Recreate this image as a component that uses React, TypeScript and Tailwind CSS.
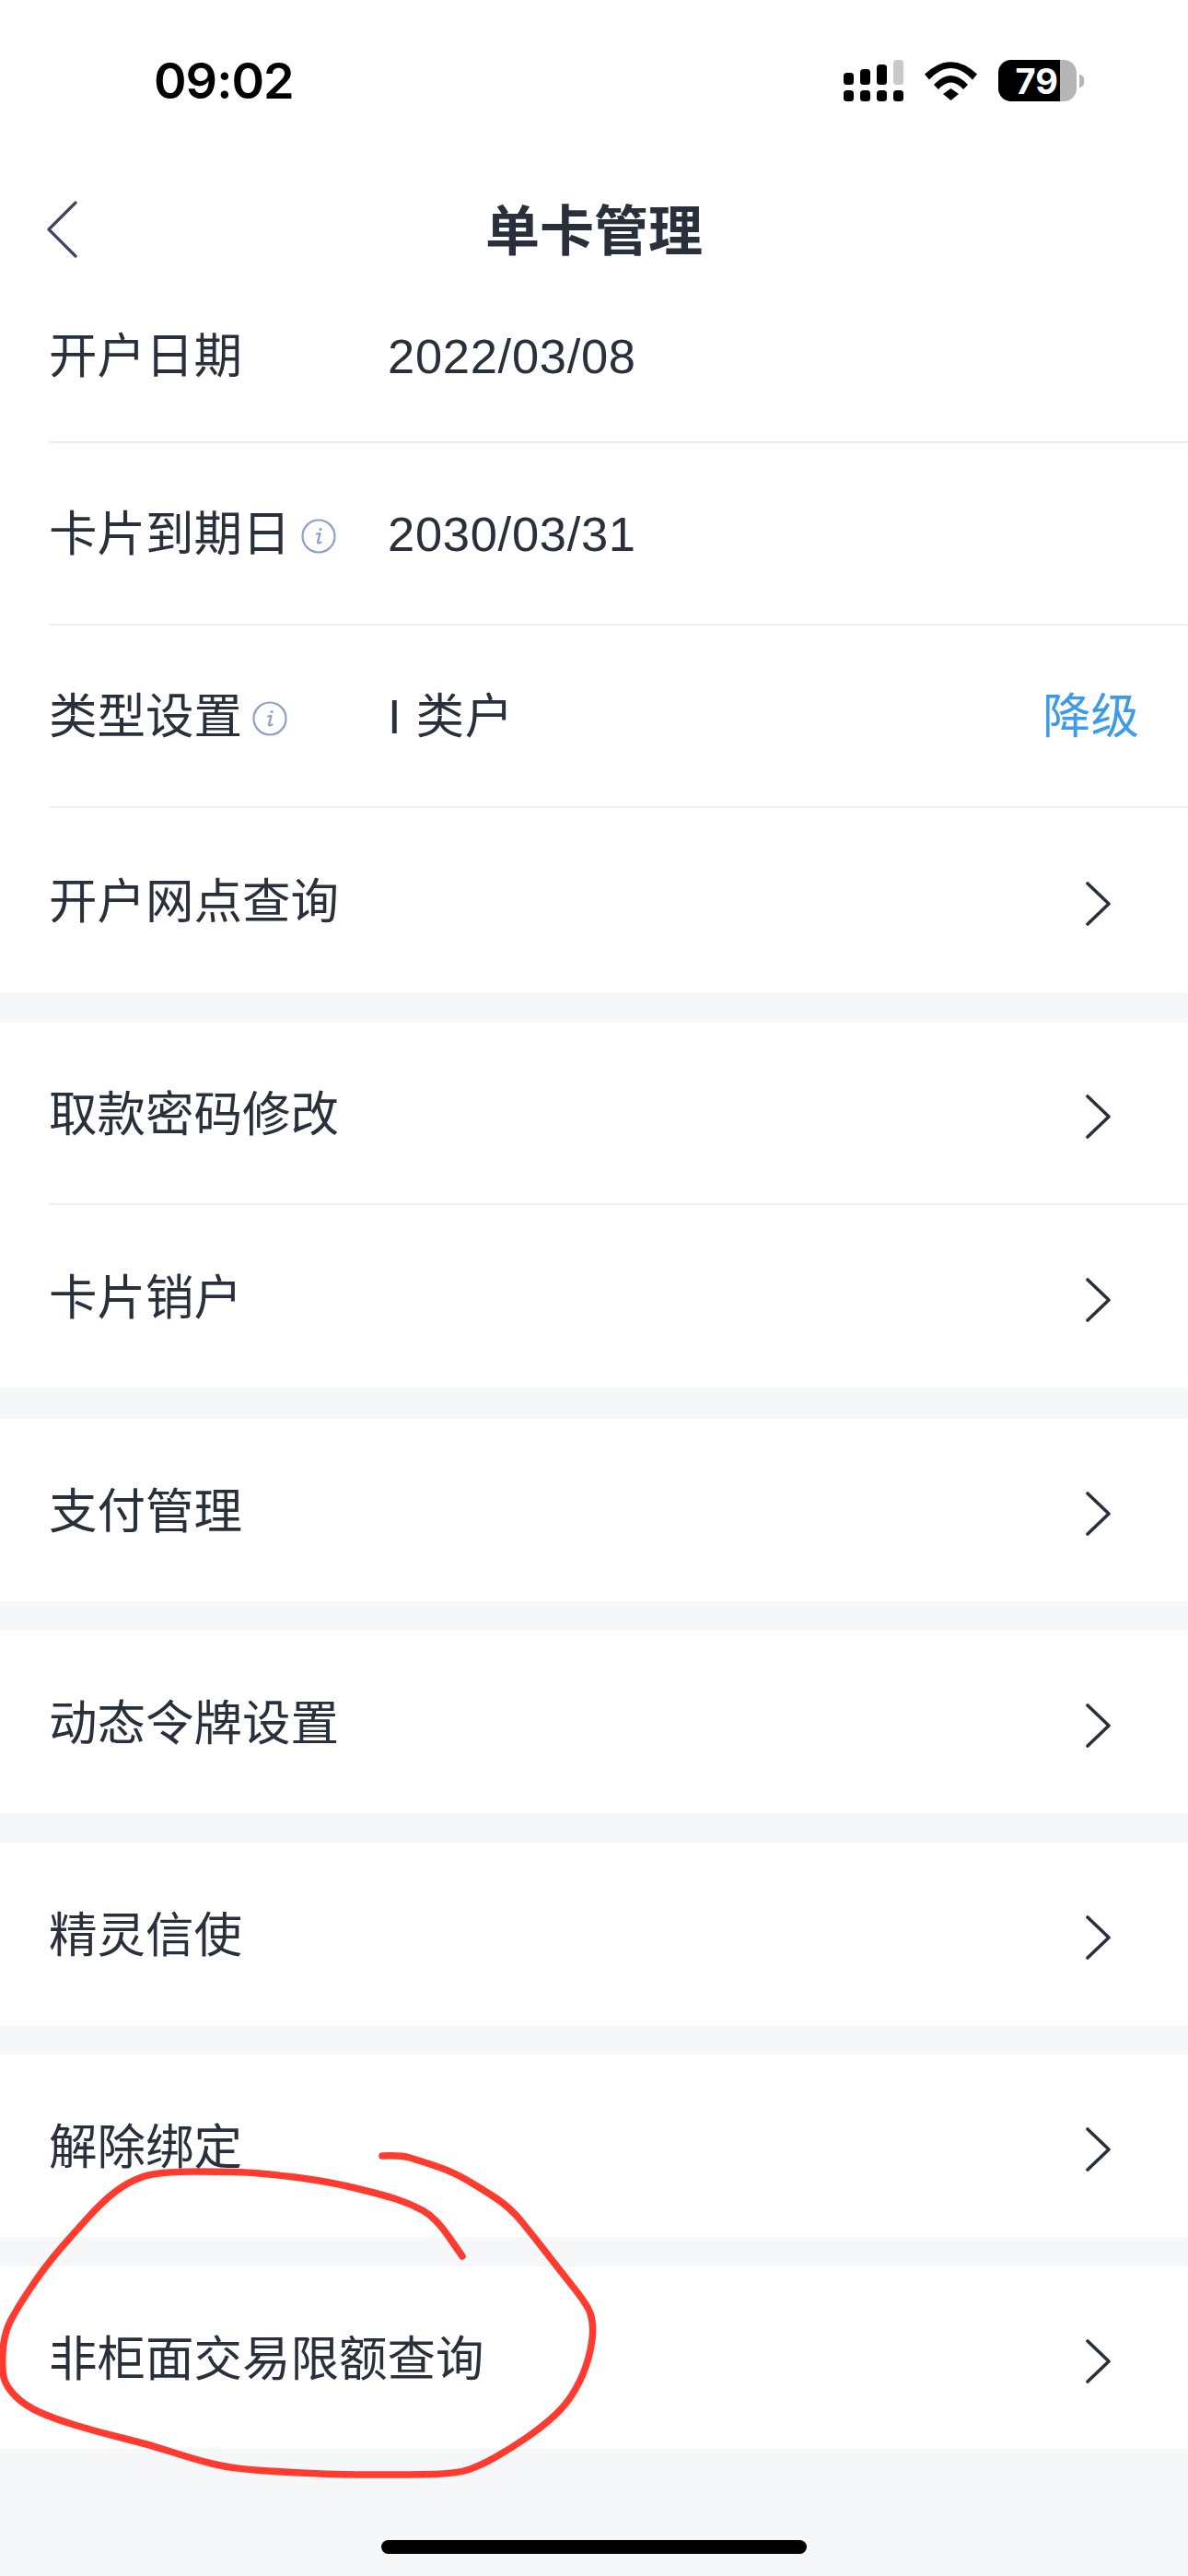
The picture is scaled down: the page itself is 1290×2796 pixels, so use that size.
const textFont = "font-['Liberation_Sans','Noto_Sans_CJK_SC',sans-serif]";

const scribble: [number, number][] = [
  [415, 2340], [435, 2339], [455, 2345], [491, 2357], [522, 2375], [554, 2396], [580, 2428], [607, 2463],
  [638, 2502], [644, 2520], [643, 2545], [634, 2577], [616, 2609], [589, 2634], [554, 2658], [522, 2676],
  [496, 2685], [446, 2686], [371, 2686], [304, 2683], [250, 2679], [210, 2669], [161, 2653], [107, 2640],
  [58, 2625], [27, 2611], [7, 2591], [2, 2573], [4, 2534], [18, 2506], [49, 2460], [80, 2424], [112, 2389],
  [138, 2369], [170, 2357], [259, 2357], [304, 2361], [357, 2368], [415, 2382], [446, 2392], [473, 2407], [502, 2449],
];

// round the hand-drawn stroke off through the midpoints
const scribblePath = () => {
  let d = `M${scribble[0][0]} ${scribble[0][1]}`;
  for (let i = 1; i < scribble.length - 1; i++) {
    const [x, y] = scribble[i];
    const [nx, ny] = scribble[i + 1];
    d += ` Q${x} ${y} ${(x + nx) / 2} ${(y + ny) / 2}`;
  }
  const last = scribble[scribble.length - 1];
  return `${d} L${last[0]} ${last[1]}`;
};

const InfoIcon = () => (
  <svg width="38" height="38" viewBox="0 0 38 38" fill="none" className="ml-[11px] mt-[3px] shrink-0">
    <circle cx="19" cy="19" r="17.5" stroke="#8f9fc9" strokeWidth="2.2" />
    <path d="M17 16.5 L20.5 16 L18 25.5 Q18 27.5 21.5 25.5" stroke="#8f9fc9" strokeWidth="2.2" strokeLinecap="round" strokeLinejoin="round" />
    <circle cx="21" cy="11.5" r="1.6" fill="#8f9fc9" />
  </svg>
);

const RowChevron = () => (
  <svg width="27" height="48" viewBox="0 0 27 48" fill="none" className="mt-[7px] shrink-0">
    <path d="M2 2 L25 24 L2 46" stroke="#2a2f3c" strokeWidth="3.6" strokeLinecap="round" strokeLinejoin="round" />
  </svg>
);

const InfoRow = ({ label, value, info, action }: { label: string; value: string; info?: boolean; action?: string }) => (
  <div className="ml-[53px] flex h-[198px] items-center border-b-2 border-[#eeeff2] pr-[53px] pt-[3px]">
    <div className="flex w-[368px] items-center">
      <span>{label}</span>
      {info ? <InfoIcon /> : null}
    </div>
    <span className="flex-1 tracking-[0.7px]">{value}</span>
    {action ? <span className="text-[#3d9be9]">{action}</span> : null}
  </div>
);

const LinkRow = ({ label, line, tall }: { label: string; line?: boolean; tall?: boolean }) => (
  <div className={`ml-[53px] flex items-center justify-between pr-[84px] ${tall ? "h-[200px]" : "h-[198px]"} ${line ? "border-b-2 border-[#eeeff2]" : ""}`}>
    <span className="mt-[5px]">{label}</span>
    <RowChevron />
  </div>
);

const Group = ({ children }: { children: React.ReactNode }) => <div className="bg-white">{children}</div>;

export default function App() {
  return (
    <div className={`relative flex h-[2796px] w-[1290px] flex-col overflow-hidden bg-[#f6f7f9] text-[52.5px] leading-none text-[#2a2f3c] ${textFont}`}>
      <div className="bg-white">
        <div className="flex h-[175px] items-center justify-between pl-[167px] pr-[113px] text-black">
          <span className="font-['Inter',sans-serif] text-[54px] font-semibold tracking-[-1px]">09:02</span>
          <div className="flex items-center gap-[23px]">
            <svg width="65" height="45" viewBox="0 0 65 45" fill="black">
              <rect x="0" y="14" width="11" height="13" rx="3.5" />
              <rect x="18" y="10" width="11" height="17" rx="3.5" />
              <rect x="36" y="5" width="11" height="22" rx="3.5" />
              <rect x="54" y="0" width="11" height="27" rx="3.5" fill="#c9c9c9" />
              <rect x="0" y="33" width="11" height="12" rx="3.5" />
              <rect x="18" y="33" width="11" height="12" rx="3.5" />
              <rect x="36" y="33" width="11" height="12" rx="3.5" />
              <rect x="54" y="33" width="11" height="12" rx="3.5" />
            </svg>
            <svg width="57" height="42" viewBox="0 0 57 42" fill="black">
              <path d="M0 13.5 Q28.5 -13 57 13.5 L52 19.5 Q28.5 -5.5 5 19.5 Z" />
              <path d="M10 25 Q28.5 5 47 25 L42 30 Q28.5 15 15 30 Z" />
              <path d="M20 35 L28.5 29 L37 35 L28.5 42 Z" />
            </svg>
            <div className="flex items-center">
              <div className="flex h-[45px] w-[67px] items-center justify-end rounded-l-[14px] bg-black pr-[2px] font-['Inter',sans-serif] text-[38px] font-bold text-white">79</div>
              <div className="h-[45px] w-[18px] rounded-r-[14px] bg-[#b5b5b5]" />
              <div className="ml-[3px] h-[14px] w-[5px] rounded-r-full bg-[#b5b5b5]" />
            </div>
          </div>
        </div>
        <div className="relative flex h-[152px] items-center justify-center pt-[2px]">
          <svg width="34" height="62" viewBox="0 0 34 62" fill="none" className="absolute left-[50px] top-[43px]">
            <path d="M32 2 L3 31 L32 60" stroke="#3d4560" strokeWidth="3.2" strokeLinecap="round" strokeLinejoin="round" />
          </svg>
          <span className="text-[59px] font-bold">单卡管理</span>
        </div>
      </div>
      <Group>
        <div className="ml-[53px] flex h-[154px] items-start border-b-2 border-[#eeeff2] pr-[53px] pt-[34px]">
          <span className="w-[368px]">开户日期</span>
          <span className="tracking-[0.7px]">2022/03/08</span>
        </div>
        <InfoRow label="卡片到期日" value="2030/03/31" info />
        <InfoRow label="类型设置" value="I 类户" info action="降级" />
        <LinkRow label="开户网点查询" tall />
      </Group>
      <div className="h-[33px]" />
      <Group>
        <LinkRow label="取款密码修改" line />
        <LinkRow label="卡片销户" />
      </Group>
      <div className="h-[34px]" />
      <Group><LinkRow label="支付管理" /></Group>
      <div className="h-[32px]" />
      <Group><LinkRow label="动态令牌设置" /></Group>
      <div className="h-[32px]" />
      <Group><LinkRow label="精灵信使" /></Group>
      <div className="h-[32px]" />
      <Group><LinkRow label="解除绑定" /></Group>
      <div className="h-[32px]" />
      <Group><LinkRow label="非柜面交易限额查询" /></Group>
      <div className="absolute bottom-[24px] left-[414px] h-[15px] w-[462px] rounded-full bg-black" />
      <svg width="1290" height="2796" viewBox="0 0 1290 2796" fill="none" className="pointer-events-none absolute left-0 top-0">
        <path d={scribblePath()} stroke="#ff3b30" strokeWidth="7.5" strokeLinecap="round" strokeLinejoin="round" />
      </svg>
    </div>
  );
}
